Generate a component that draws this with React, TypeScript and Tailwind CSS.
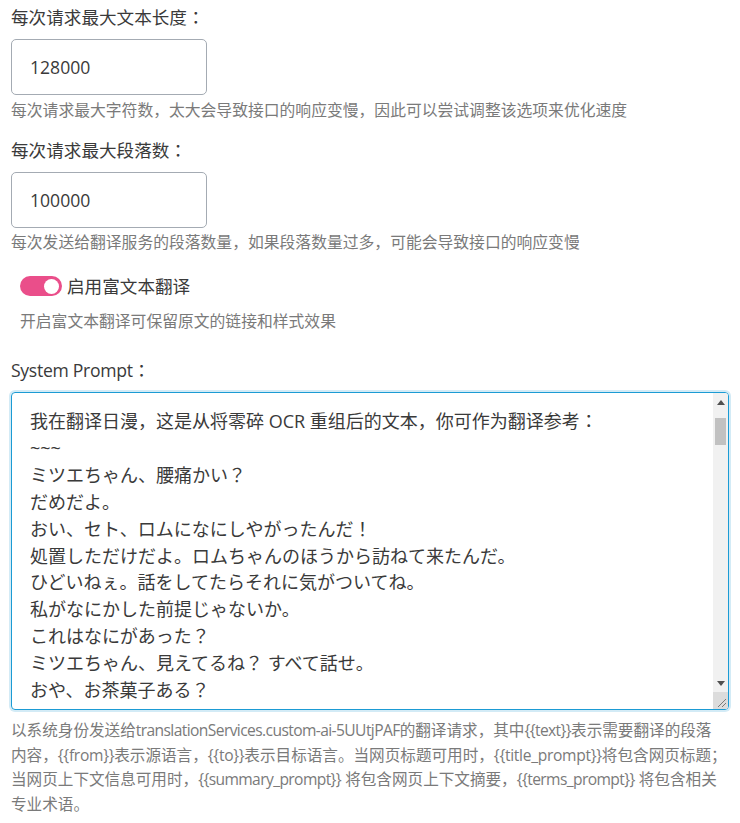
import React from "react";

const promptText = `我在翻译日漫，这是从将零碎 OCR 重组后的文本，你可作为翻译参考：
~~~
ミツエちゃん、腰痛かい？
だめだよ。
おい、セト、ロムになにしやがったんだ！
処置しただけだよ。ロムちゃんのほうから訪ねて来たんだ。
ひどいねぇ。話をしてたらそれに気がついてね。
私がなにかした前提じゃないか。
これはなにがあった？
ミツエちゃん、見えてるね？ すべて話せ。
おや、お茶菓子ある？
ないよ。
~~~
请将以下文本翻译为{{to}}：
{{text}}`;

function L({ children }: { children: React.ReactNode }) {
  return <span className="tracking-[-0.3px]">{children}</span>;
}

function LL({ children }: { children: React.ReactNode }) {
  return <span className="tracking-[-0.6px]">{children}</span>;
}

export default function App() {
  return (
    <div className="w-[740px] min-h-[823px] bg-white pl-[11px] pr-[11px] pt-[4px] font-['Open_Sans','Noto_Sans_CJK_SC',sans-serif] text-[#3a3a3a]">
      <div className="text-[17.6px] leading-[26px]">每次请求最大文本长度<span className="font-['Noto_Sans_CJK_JP']">：</span></div>
      <input
        defaultValue="128000"
        className="mt-[9px] block h-[56px] w-[196px] rounded-[5px] border border-[#a4abb3] pl-[18px] text-[17.6px] text-[#3a3a3a] outline-none"
      />
      <div className="mt-[4px] text-[15.8px] leading-[22px] text-[#7a7a7a]">
        每次请求最大字符数，太大会导致接口的响应变慢，因此可以尝试调整该选项来优化速度
      </div>

      <div className="mt-[16px] text-[17.6px] leading-[26px]">每次请求最大段落数<span className="font-['Noto_Sans_CJK_JP']">：</span></div>
      <input
        defaultValue="100000"
        className="mt-[9px] block h-[56px] w-[196px] rounded-[5px] border border-[#a4abb3] pl-[18px] text-[17.6px] text-[#3a3a3a] outline-none"
      />
      <div className="mt-[3px] text-[15.8px] leading-[22px] text-[#7a7a7a]">
        每次发送给翻译服务的段落数量，如果段落数量过多，可能会导致接口的响应变慢
      </div>

      <div className="mt-[20px] flex items-center gap-[5px] pl-[9px]">
        <div className="flex h-[20px] w-[42px] items-center justify-end rounded-full bg-[#ea4e8a] pr-[3px]">
          <div className="h-[15px] w-[15px] rounded-full bg-white" />
        </div>
        <span className="text-[17.6px] leading-[26px]">启用富文本翻译</span>
      </div>
      <div className="mt-[11px] pl-[9px] text-[15.8px] leading-[22px] text-[#7a7a7a]">
        开启富文本翻译可保留原文的链接和样式效果
      </div>

      <div className="mt-[25px] text-[17.6px] leading-[26px]">
        <span className="tracking-[-0.3px]">System Prompt</span><span className="font-['Noto_Sans_CJK_JP']">：</span>
      </div>

      <div className="mt-[9px] flex h-[318px] w-[718px] overflow-hidden rounded-[4px] border border-[#1b9bd4] shadow-[0_0_0_2px_#d3ebf6]">
        <textarea
          defaultValue={promptText}
          className="flex-1 resize-none overflow-hidden border-none pl-[18px] pt-[15px] pr-[10px] font-['Open_Sans','Noto_Sans_CJK_JP',sans-serif] text-[18px] leading-[26.9px] text-[#3a3a3a] outline-none"
        />
        <div className="flex w-[15px] flex-col bg-[#f1f1f1]">
          <div className="flex h-[18px] items-center justify-center">
            <svg width="8" height="5" viewBox="0 0 8 5">
              <path d="M0 5 L4 0 L8 5 Z" fill="#505050" />
            </svg>
          </div>
          <div className="mx-[2px] mt-[7px] h-[27px] bg-[#c1c1c1]" />
          <div className="flex-1" />
          <div className="flex h-[18px] items-center justify-center">
            <svg width="8" height="5" viewBox="0 0 8 5">
              <path d="M0 0 L8 0 L4 5 Z" fill="#505050" />
            </svg>
          </div>
          <div className="flex h-[17px] items-end justify-end bg-[#dcdcdc] pb-[1px] pr-[1px]">
            <svg width="10" height="10" viewBox="0 0 10 10">
              <path d="M9 1 L1 9 M9 5 L5 9" stroke="#7a7a7a" strokeWidth="1" />
            </svg>
          </div>
        </div>
      </div>

      <div className="mt-[8px] text-[15.6px] leading-[24.6px] text-[#7a7a7a]">
        <div className="whitespace-nowrap">以系统身份发送给<LL>translationServices.custom-ai-5UUtjPAF</LL>的翻译请求，其中<LL>{"{{text}}"}</LL>表示需要翻译的段落</div>
        <div className="whitespace-nowrap">内容，<L>{"{{from}}"}</L>表示源语言，<L>{"{{to}}"}</L>表示目标语言。当网页标题可用时，<L>{"{{title_prompt}}"}</L>将包含网页标题；</div>
        <div className="whitespace-nowrap">当网页上下文信息可用时，<LL>{"{{summary_prompt}}"}</LL> 将包含网页上下文摘要，<LL>{"{{terms_prompt}}"}</LL> 将包含相关</div>
        <div className="whitespace-nowrap">专业术语。</div>
      </div>
    </div>
  );
}
